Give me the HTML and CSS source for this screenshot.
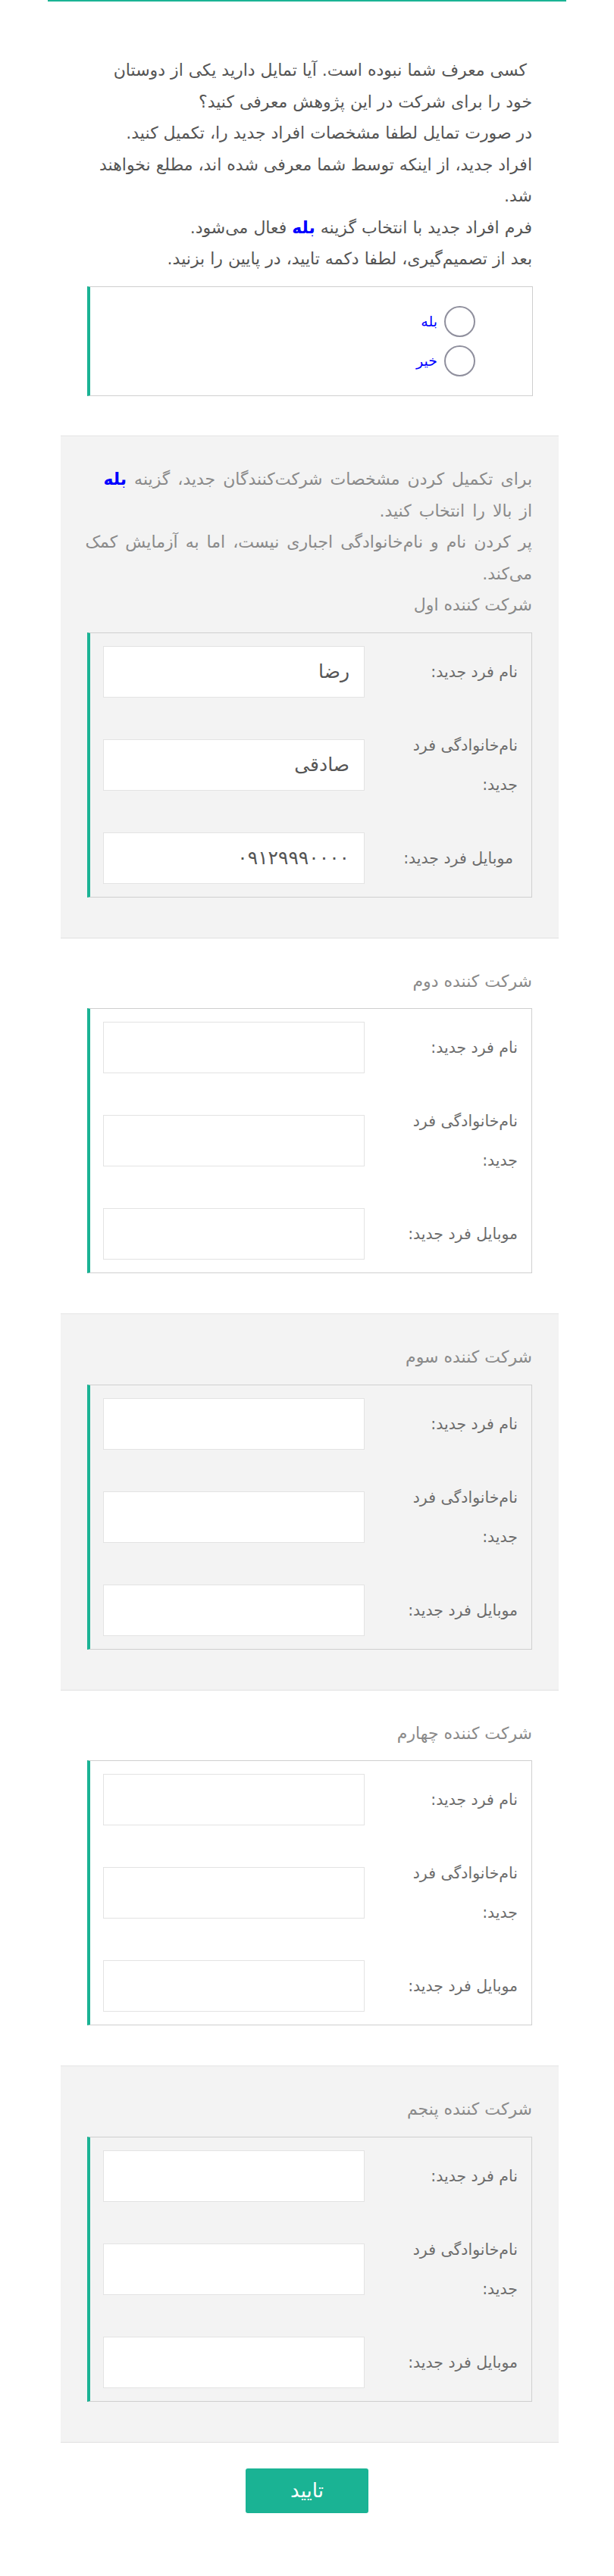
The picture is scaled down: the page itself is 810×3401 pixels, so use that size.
FILE: index.html
```html
<!DOCTYPE html>
<html lang="fa" dir="rtl">
<head>
<meta charset="utf-8">
<title>معرفی افراد جدید</title>
<link rel="stylesheet" href="styles.css">
</head>
<body>
<div class="page">
  <div class="topline"></div>

  <p class="intro">&nbsp;کسی معرف شما نبوده است. آیا تمایل دارید یکی از دوستان<br>خود را برای شرکت در این پژوهش معرفی کنید؟<br>در صورت تمایل لطفا مشخصات افراد جدید را، تکمیل کنید.<br>افراد جدید، از اینکه توسط شما معرفی شده اند، مطلع نخواهند<br>شد.<br>فرم افراد جدید با انتخاب گزینه <b class="hl">بله</b> فعال می‌شود.<br>بعد از تصمیم‌گیری، لطفا دکمه تایید، در پایین را بزنید.</p>

  <div class="choice-box">
    <label class="choice"><input class="choice-radio" type="radio" name="agree"><span class="choice-text">بله</span></label>
    <label class="choice"><input class="choice-radio" type="radio" name="agree"><span class="choice-text">خیر</span></label>
  </div>

  <section class="group group--shaded">
    <p class="group-text"><span class="group-note">برای تکمیل کردن مشخصات شرکت‌کنندگان جدید، گزینه <b class="hl">بله</b><br>از بالا را انتخاب کنید.<br>پر کردن نام و نام‌خانوادگی اجباری نیست، اما به آزمایش کمک<br>می‌کند.</span><br>شرکت کننده اول</p>
    <div class="form-box">
      <div class="field"><span class="field-label">نام فرد جدید:</span><input class="field-input" type="text" value="رضا"></div>
      <div class="field"><span class="field-label">نام‌خانوادگی فرد<br>جدید:</span><input class="field-input" type="text" value="صادقی"></div>
      <div class="field"><span class="field-label field-label--inset">موبایل فرد جدید:</span><input class="field-input" type="text" value="۰۹۱۲۹۹۹۰۰۰۰"></div>
    </div>
  </section>

  <section class="group">
    <p class="group-text">شرکت کننده دوم</p>
    <div class="form-box">
      <div class="field"><span class="field-label">نام فرد جدید:</span><input class="field-input" type="text"></div>
      <div class="field"><span class="field-label">نام‌خانوادگی فرد<br>جدید:</span><input class="field-input" type="text"></div>
      <div class="field"><span class="field-label">موبایل فرد جدید:</span><input class="field-input" type="text"></div>
    </div>
  </section>

  <section class="group group--shaded">
    <p class="group-text">شرکت کننده سوم</p>
    <div class="form-box">
      <div class="field"><span class="field-label">نام فرد جدید:</span><input class="field-input" type="text"></div>
      <div class="field"><span class="field-label">نام‌خانوادگی فرد<br>جدید:</span><input class="field-input" type="text"></div>
      <div class="field"><span class="field-label">موبایل فرد جدید:</span><input class="field-input" type="text"></div>
    </div>
  </section>

  <section class="group">
    <p class="group-text">شرکت کننده چهارم</p>
    <div class="form-box">
      <div class="field"><span class="field-label">نام فرد جدید:</span><input class="field-input" type="text"></div>
      <div class="field"><span class="field-label">نام‌خانوادگی فرد<br>جدید:</span><input class="field-input" type="text"></div>
      <div class="field"><span class="field-label">موبایل فرد جدید:</span><input class="field-input" type="text"></div>
    </div>
  </section>

  <section class="group group--shaded">
    <p class="group-text">شرکت کننده پنجم</p>
    <div class="form-box">
      <div class="field"><span class="field-label">نام فرد جدید:</span><input class="field-input" type="text"></div>
      <div class="field"><span class="field-label">نام‌خانوادگی فرد<br>جدید:</span><input class="field-input" type="text"></div>
      <div class="field"><span class="field-label">موبایل فرد جدید:</span><input class="field-input" type="text"></div>
    </div>
  </section>

  <div class="actions">
    <button class="submit" type="button">تایید</button>
  </div>
</div>
</body>
</html>
```

FILE: styles.css
```css
html, body {
  margin: 0;
  padding: 0;
  background: #fff;
}

body {
  font-family: "DejaVu Sans", sans-serif;
  font-size: 22px;
  color: #555;
}

.topline {
  height: 2px;
  margin: 0 63px;
  background: #1ab394;
}

.intro {
  margin: 70px 108px 0 115px;
  line-height: 41.5px;
  color: #555;
  white-space: nowrap;
}

.hl {
  color: #0000ff;
}

.choice-box {
  margin: 15.5px 107px 0 115px;
  padding: 19px 75px 20px 20px;
  border: 1px solid #cfcfcf;
  border-left: 4px solid #1ab394;
  background: #fff;
}

.choice {
  display: flex;
  align-items: center;
  height: 52px;
  gap: 9px;
}

.choice-radio {
  appearance: none;
  -webkit-appearance: none;
  margin: 0;
  width: 41px;
  height: 41px;
  border: 2px solid #8f8f9d;
  border-radius: 50%;
  background: #fff;
  box-sizing: border-box;
}

.choice-text {
  color: #0000ff;
  font-size: 19px;
}

.group {
  margin: 0 73px 0 80px;
  padding: 36px 35px 53px;
}

.group--shaded {
  background: #f3f3f3;
  border-top: 1px solid #e4e4e4;
  border-bottom: 1px solid #e0e0e0;
}

.intro + .choice-box + .group {
  margin-top: 52px;
}

.group-text {
  margin: 0;
  line-height: 41.5px;
  color: #8a8a8a;
  white-space: nowrap;
}

.group-note {
  word-spacing: 3px;
}

.form-box {
  margin-top: 15px;
  padding: 17px 18px 17px 17px;
  border: 1px solid #cfcfcf;
  border-left: 4px solid #1ab394;
  display: flex;
  flex-direction: column;
  gap: 37px;
  background: #fff;
}

.group--shaded .form-box {
  background: transparent;
}

.field {
  display: flex;
  align-items: center;
}

.field-label {
  flex: 1;
  font-size: 20.5px;
  line-height: 52px;
  color: #6c6c6c;
  white-space: nowrap;
}

.field-label--inset {
  padding-right: 6px;
}

.field-input {
  width: 345px;
  height: 68px;
  box-sizing: border-box;
  margin: 0;
  padding: 0 19px;
  border: 1px solid #e3e3e3;
  background: #fff;
  font-family: "DejaVu Sans", sans-serif;
  font-size: 25px;
  color: #555;
  direction: rtl;
  text-align: right;
  outline: none;
}

.actions {
  display: flex;
  justify-content: center;
  padding-top: 34px;
  padding-bottom: 90px;
}

.submit {
  width: 162px;
  height: 59px;
  border: none;
  border-radius: 3px;
  background: #1ab394;
  color: #fff;
  font-family: "DejaVu Sans", sans-serif;
  font-size: 26px;
}
```
